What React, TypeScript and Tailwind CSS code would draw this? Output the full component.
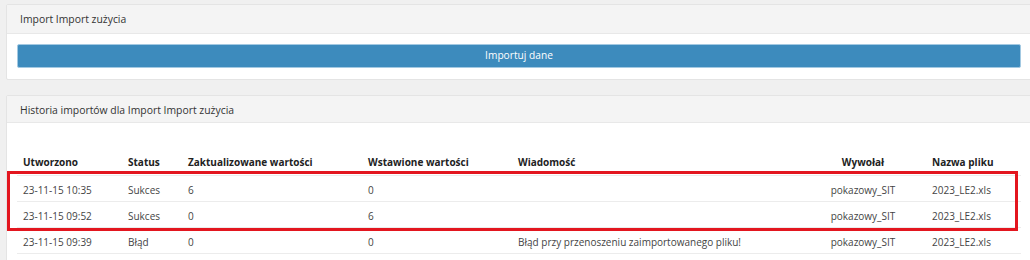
import React from "react";

// --- DATA ---
const rows = [
  { created: "23-11-15 10:35", status: "Sukces", updated: "6", inserted: "0", message: "", user: "pokazowy_SIT", file: "2023_LE2.xls" },
  { created: "23-11-15 09:52", status: "Sukces", updated: "0", inserted: "6", message: "", user: "pokazowy_SIT", file: "2023_LE2.xls" },
  { created: "23-11-15 09:39", status: "Błąd", updated: "0", inserted: "0", message: "Błąd przy przenoszeniu zaimportowanego pliku!", user: "pokazowy_SIT", file: "2023_LE2.xls" },
];

export default function App() {
  return (
    <div className="relative w-[1030px] h-[260px] overflow-hidden bg-[#f0f0f0] font-['Open_Sans',sans-serif] text-[10px] text-[#444]">
      <div className="pl-[6px] pt-[4px]">
        {/* --- IMPORT CARD --- */}
        <section className="w-[1026px] bg-white border border-[#e4e4e4] rounded-[2px]">
          <div className="h-[29px] bg-[#f4f4f4] border-b border-[#e8e8e8] px-[13px] pt-[2px] flex items-center text-[#333] text-[10.4px]">
            Import Import zużycia
          </div>
          <div className="px-[10px] pt-[10px] pb-[11px]">
            <button className="w-full h-[24px] bg-[#3d8bbd] border border-[#a3c9e2] rounded-[2px] text-white text-[10.2px] flex items-center justify-center">
              Importuj dane
            </button>
          </div>
        </section>

        {/* --- HISTORY CARD --- */}
        <section className="mt-[15px] w-[1026px] bg-white border border-[#e4e4e4] rounded-[2px]">
          <div className="h-[27px] bg-[#f4f4f4] border-b border-[#e8e8e8] px-[13px] pt-[3px] flex items-center text-[#333] text-[10.4px]">
            Historia importów dla Import Import zużycia
          </div>
          <div className="px-[10px] pt-[24px]">
            <table className="w-[1004px] table-fixed border-collapse">
              <colgroup>
                <col className="w-[105px]" />
                <col className="w-[60px]" />
                <col className="w-[180px]" />
                <col className="w-[150px]" />
                <col className="w-[288px]" />
                <col className="w-[126px]" />
                <col className="w-[95px]" />
              </colgroup>
              <thead>
                <tr className="h-[28px] text-[#222] font-bold">
                  <th className="px-[6px] pt-[3px] text-left">Utworzono</th>
                  <th className="px-[6px] pt-[3px] text-left">Status</th>
                  <th className="px-[6px] pt-[3px] text-left">Zaktualizowane wartości</th>
                  <th className="px-[6px] pt-[3px] text-left">Wstawione wartości</th>
                  <th className="px-[6px] pt-[3px] text-left">Wiadomość</th>
                  <th className="px-[6px] pt-[3px] text-center">Wywołał</th>
                  <th className="px-[6px] pt-[3px] text-left">Nazwa pliku</th>
                </tr>
              </thead>
              <tbody>
                {rows.map((r, i) => (
                  <tr key={i} className="h-[26px] border-t border-[#ececec]">
                    <td className="px-[6px] pt-[4px]">{r.created}</td>
                    <td className="px-[6px] pt-[4px]">{r.status}</td>
                    <td className="px-[6px] pt-[4px]">{r.updated}</td>
                    <td className="px-[6px] pt-[4px]">{r.inserted}</td>
                    <td className="px-[6px] pt-[4px] whitespace-nowrap">{r.message}</td>
                    <td className="px-[6px] pt-[4px] text-center">{r.user}</td>
                    <td className="px-[6px] pt-[4px]">{r.file}</td>
                  </tr>
                ))}
                <tr className="h-[26px] border-t border-[#ececec]">
                  <td colSpan={7} />
                </tr>
              </tbody>
            </table>
          </div>
        </section>
      </div>

      {/* annotation frame drawn over the first two rows */}
      <div className="absolute left-[7px] top-[171px] w-[1011px] h-[60px] border-[3px] border-[#e3161f] pointer-events-none" />
    </div>
  );
}
